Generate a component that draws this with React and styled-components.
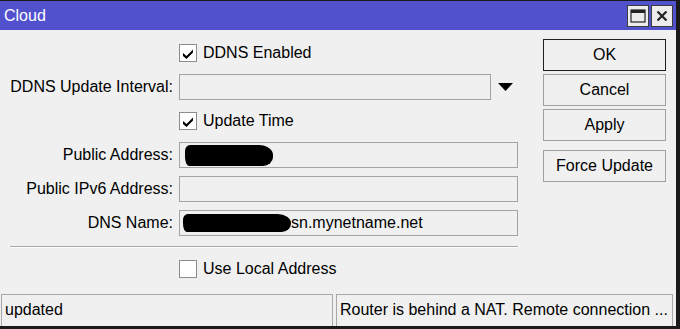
import React from "react";
import styled, { createGlobalStyle } from "styled-components";

const GlobalStyle = createGlobalStyle`
    html, body {
        margin: 0;
        padding: 0;
        background: #f0f0f0;
    }
    body {
        font-family: "Liberation Sans", Arial, sans-serif;
        font-size: 16px;
        color: #000;
    }
`;

const Window = styled.div`
    width: 680px;
    height: 329px;
    box-sizing: border-box;
    border-top: 1px solid #1a1a1a;
    border-right: 4px solid #1a1a1a;
    border-bottom: 3px solid #1a1a1a;
    display: flex;
    flex-direction: column;
    background: #f0f0f0;
`;

const TitleBar = styled.div`
    height: 29px;
    flex-shrink: 0;
    background: #5151cd;
    display: flex;
    align-items: center;
    justify-content: space-between;
    padding: 0 3px 0 4px;
`;

const Title = styled.span`
    color: #fff;
    font-size: 16px;
`;

const TitleButtons = styled.div`
    display: flex;
    gap: 2px;
`;

const TitleButton = styled.div`
    width: 22px;
    height: 22px;
    box-sizing: border-box;
    border: 1px solid #3c3c3c;
    background: #ececec;
    display: flex;
    align-items: center;
    justify-content: center;
`;

const Body = styled.div`
    flex: 1;
    display: flex;
    padding: 0 10px;
    gap: 25px;
`;

const Form = styled.div`
    padding-top: 10px;
    display: grid;
    grid-template-columns: 163px 339px;
    grid-template-rows: repeat(6, 26px) 4px 26px;
    column-gap: 6px;
    row-gap: 8px;
    align-content: start;
`;

const Label = styled.div`
    display: flex;
    align-items: center;
    justify-content: flex-end;
    white-space: nowrap;
`;

const Field = styled.div`
    display: flex;
    align-items: center;
`;

const Input = styled.div`
    box-sizing: border-box;
    width: ${props => props.width || 339}px;
    height: 26px;
    border: 1px solid #a3a3a3;
    background: #f0f0f0;
    display: flex;
    align-items: center;
    padding-left: 3px;
    white-space: nowrap;
    overflow: hidden;
`;

const Redact = styled.span`
    display: inline-block;
    width: ${props => props.width}px;
    height: ${props => props.height}px;
    background: #000;
    border-radius: 5px 14px 10px 4px / 6px 10px 9px 9px;
    margin-left: ${props => props.offset || 0}px;
    flex-shrink: 0;
`;

const DropArrow = styled.div`
    flex: 1;
    display: flex;
    justify-content: center;
    align-items: center;
    padding-left: 1px;
`;

const Check = styled.label`
    display: flex;
    align-items: center;
    gap: 6px;
    white-space: nowrap;
`;

const Box = styled.span`
    width: 18px;
    height: 18px;
    box-sizing: border-box;
    border: 1px solid #8c8c8c;
    background: #fff;
    display: flex;
    align-items: center;
    justify-content: center;
`;

const Separator = styled.div`
    grid-column: 1 / -1;
    align-self: end;
    height: 2px;
    border-top: 1px solid #a8a8a8;
    border-bottom: 1px solid #fff;
    box-sizing: border-box;
`;

const Actions = styled.div`
    width: 123px;
    padding-top: 9px;
    display: flex;
    flex-direction: column;
    gap: 3px;
`;

const Button = styled.div`
    height: 32px;
    box-sizing: border-box;
    border: 1px solid ${props => (props.primary ? "#1e1e1e" : "#a0a0a0")};
    background: #f0f0f0;
    display: flex;
    align-items: center;
    justify-content: center;
    margin-top: ${props => (props.spaced ? 6 : 0)}px;
`;

const StatusBar = styled.div`
    height: 32px;
    flex-shrink: 0;
    display: flex;
    gap: 3px;
    padding: 0 3px 0 1px;
`;

const StatusCell = styled.div`
    box-sizing: border-box;
    width: ${props => (props.width ? `${props.width}px` : "auto")};
    flex: ${props => (props.width ? "none" : 1)};
    border: 1px solid #a8a8a8;
    border-bottom: none;
    display: flex;
    align-items: center;
    padding: 0 0 2px 3px;
    white-space: nowrap;
    overflow: hidden;
`;

function CheckMark() {
    return (
        <svg width="12" height="11" viewBox="0 0 12 11">
            <path d="M1 5 L4.5 8 L11 1.5 L11 4.5 L4.5 11 L1 8 Z" fill="#000" />
        </svg>
    );
}

function Checkbox({ checked, children }) {
    return (
        <Check>
            <Box>{checked && <CheckMark />}</Box>
            <span>{children}</span>
        </Check>
    );
}

export default function App() {
    return (
        <>
            <GlobalStyle />
            <Window>
                <TitleBar>
                    <Title>Cloud</Title>
                    <TitleButtons>
                        <TitleButton>
                            <svg width="16" height="14" viewBox="0 0 16 14">
                                <rect x="1" y="1" width="14" height="12" fill="none" stroke="#222" strokeWidth="1.2" />
                                <rect x="1" y="1" width="14" height="3" fill="#222" />
                            </svg>
                        </TitleButton>
                        <TitleButton>
                            <svg width="12" height="12" viewBox="0 0 12 12">
                                <path d="M1.5 1.5 L10.5 10.5 M10.5 1.5 L1.5 10.5" stroke="#222" strokeWidth="2.2" />
                            </svg>
                        </TitleButton>
                    </TitleButtons>
                </TitleBar>
                <Body>
                    <Form>
                        <Label />
                        <Field>
                            <Checkbox checked>DDNS Enabled</Checkbox>
                        </Field>

                        <Label>DDNS Update Interval:</Label>
                        <Field>
                            <Input width={312} />
                            <DropArrow>
                                <svg width="15" height="8" viewBox="0 0 15 8">
                                    <path d="M0 0 H15 L7.5 8 Z" fill="#000" />
                                </svg>
                            </DropArrow>
                        </Field>

                        <Label />
                        <Field>
                            <Checkbox checked>Update Time</Checkbox>
                        </Field>

                        <Label>Public Address:</Label>
                        <Field>
                            <Input>
                                <Redact width={88} height={21} offset={2} />
                            </Input>
                        </Field>

                        <Label>Public IPv6 Address:</Label>
                        <Field>
                            <Input />
                        </Field>

                        <Label>DNS Name:</Label>
                        <Field>
                            <Input>
                                <Redact width={108} height={18} />
                                <span>sn.mynetname.net</span>
                            </Input>
                        </Field>

                        <Separator />

                        <Label />
                        <Field>
                            <Checkbox>Use Local Address</Checkbox>
                        </Field>
                    </Form>
                    <Actions>
                        <Button primary>OK</Button>
                        <Button>Cancel</Button>
                        <Button>Apply</Button>
                        <Button spaced>Force Update</Button>
                    </Actions>
                </Body>
                <StatusBar>
                    <StatusCell width={332}>updated</StatusCell>
                    <StatusCell>Router is behind a NAT. Remote connection ...</StatusCell>
                </StatusBar>
            </Window>
        </>
    );
}
